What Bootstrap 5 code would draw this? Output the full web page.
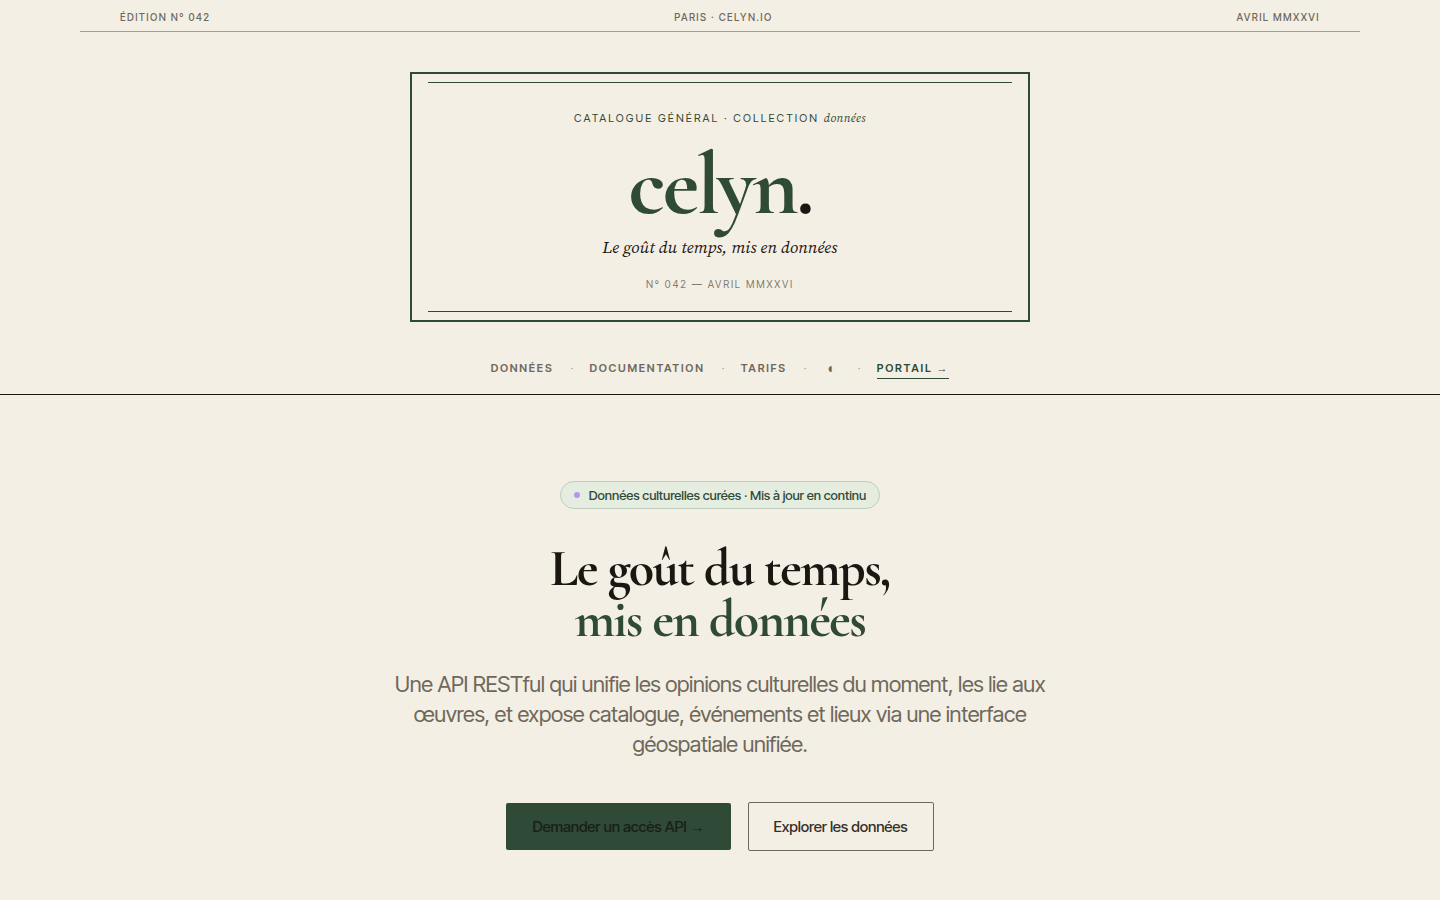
<!DOCTYPE html>
<html lang="fr">
<head>
<meta charset="utf-8">
<meta name="viewport" content="width=device-width, initial-scale=1">
<title>celyn. — Le goût du temps, mis en données</title>
<link href="https://cdn.jsdelivr.net/npm/bootstrap@5.3.0/dist/css/bootstrap.min.css" rel="stylesheet">
<style>
:root { --paper:#f4efe4; --green:#2f4a36; --ink:#1a1612; --muted:#6e685c; --display:"Cormorant Garamond","Liberation Serif",serif; --text-serif:"Source Serif 4","Liberation Serif",serif; }
body { background:var(--paper); color:var(--ink); font-family:"Inter Tight",Inter,sans-serif; }
.edition-bar { max-width:1280px; padding:10px 40px 6px; border-bottom:1px solid #a39d90; font-size:10px; line-height:15px; font-weight:500; letter-spacing:0.14em; color:var(--muted); }
.plate { max-width:620px; margin-top:40px; padding:8px 16px; border:2px solid var(--green); }
.plate-inner { border-top:1px solid var(--green); border-bottom:1px solid var(--green); padding:24px 0 19px; }
.plate-caption { font-size:11px; line-height:22px; letter-spacing:0.19em; color:var(--green); }
.plate-caption em { font-family:var(--text-serif); font-size:12px; letter-spacing:0.03em; }
.wordmark { font-family:var(--display); font-weight:700; font-size:88px; line-height:80px; letter-spacing:-0.03em; color:var(--green); margin-top:16px; }
.wordmark span { color:var(--ink); }
.tagline { font-family:var(--text-serif); font-size:17px; line-height:24px; margin-top:10px; }
.issue { font-size:10px; line-height:16px; letter-spacing:0.18em; color:#817b6f; margin-top:17px; }
.main-nav { padding:36px 16px 15px; gap:17px; font-size:11px; line-height:20px; font-weight:600; letter-spacing:0.16em; border-bottom:1px solid var(--ink); }
.main-nav a { color:var(--muted); text-decoration:none; }
.main-nav .portal { color:var(--green); border-bottom:1px solid var(--green); }
.main-nav .sep { color:#a39d90; font-weight:400; width:2px; }
.arrow { font-family:"Liberation Sans",sans-serif; }
.theme-switch { border:0; background:none; padding:0; width:18px; font:14px/20px "Liberation Sans",sans-serif; color:var(--muted); }
.hero { padding:86px 16px 48px; }
.pill { border:1px solid #bfcdbf; background:#e5ece0; color:var(--green); font-size:13px; line-height:18px; font-weight:500; letter-spacing:-0.005em; padding:4px 13px; gap:9px; }
.dot { width:6px; height:6px; background:#b197ef; }
h1 { font-family:var(--display); font-weight:700; font-size:52px; line-height:51px; letter-spacing:-0.03em; margin:34px 0 0; }
h1 span { color:var(--green); }
.intro { max-width:680px; font-size:22px; line-height:30px; letter-spacing:-0.015em; color:var(--muted); margin:24px 0 43px; }
.cta-row { gap:17px; }
.cta { font-size:15px; line-height:23px; font-weight:500; letter-spacing:-0.01em; border-radius:2px; padding:12px 26px; --bs-btn-border-width:0; }
.cta-main { background:var(--green); color:#1a1e16; }
.cta-alt { border:1px solid var(--muted); padding:12px 25px; color:#35302a; }
</style>
</head>
<body>
<header class="text-center">
  <div class="edition-bar d-flex justify-content-between mx-auto">
    <span>ÉDITION N° 042</span><span>PARIS · CELYN.IO</span><span>AVRIL MMXXVI</span>
  </div>
  <div class="plate mx-auto">
    <div class="plate-inner">
      <div class="plate-caption">CATALOGUE GÉNÉRAL · COLLECTION <em>données</em></div>
      <div class="wordmark">celyn<span>.</span></div>
      <div class="tagline fst-italic">Le goût du temps, mis en données</div>
      <div class="issue">N° 042 — AVRIL MMXXVI</div>
    </div>
  </div>
  <nav class="main-nav d-flex flex-wrap justify-content-center align-items-start" aria-label="Navigation principale">
    <a href="#donnees">DONNÉES</a><span class="sep">·</span>
    <a href="#documentation">DOCUMENTATION</a><span class="sep">·</span>
    <a href="#tarifs">TARIFS</a><span class="sep">·</span>
    <button class="theme-switch" type="button" aria-label="Changer de thème">◐</button><span class="sep">·</span>
    <a class="portal" href="#portail">PORTAIL <span class="arrow">→</span></a>
  </nav>
</header>
<main class="hero d-flex flex-column align-items-center text-center">
  <div class="pill rounded-pill d-inline-flex align-items-center"><span class="dot rounded-circle"></span>Données culturelles curées · Mis à jour en continu</div>
  <h1>Le goût du temps,<br><span>mis en données</span></h1>
  <p class="intro">Une API RESTful qui unifie les opinions culturelles du moment, les lie aux œuvres, et expose catalogue, événements et lieux via une interface géospatiale unifiée.</p>
  <div class="cta-row d-flex flex-wrap justify-content-center align-items-center">
    <a class="btn cta cta-main" href="#acces">Demander un accès API <span class="arrow">→</span></a>
    <a class="btn cta cta-alt" href="#donnees">Explorer les données</a>
  </div>
</main>
<script src="https://cdn.jsdelivr.net/npm/bootstrap@5.3.0/dist/js/bootstrap.bundle.min.js"></script>
</body>
</html>
